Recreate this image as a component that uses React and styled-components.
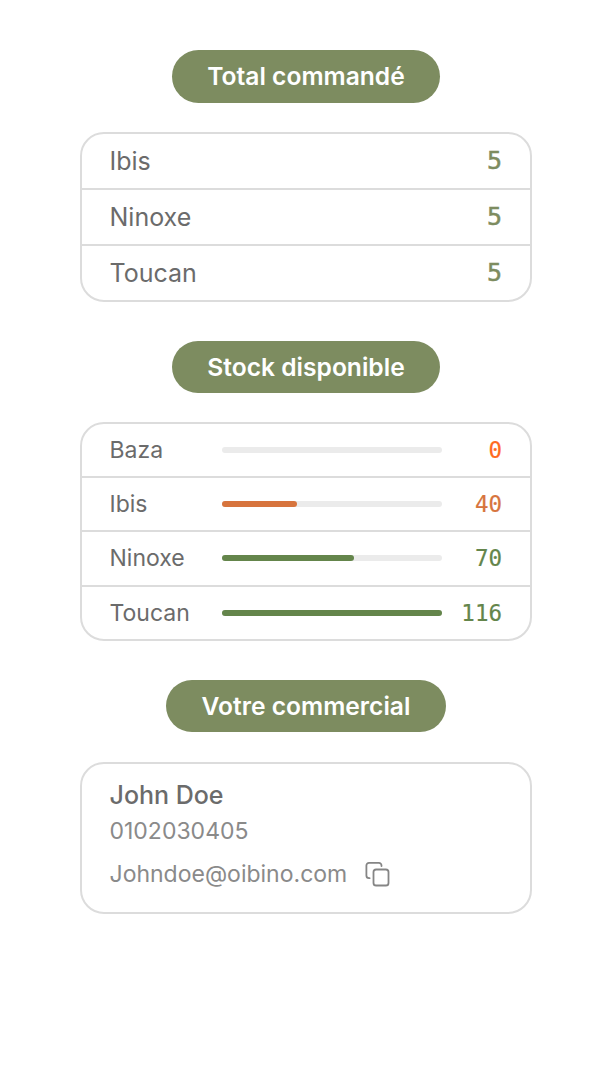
import styled, { createGlobalStyle } from "styled-components";

const GlobalStyle = createGlobalStyle`
  html, body { margin: 0; padding: 0; background: #fff; }
  body { font-family: Inter, "Liberation Sans", sans-serif; }
`;

const orders = [
  { name: "Ibis", qty: 5 },
  { name: "Ninoxe", qty: 5 },
  { name: "Toucan", qty: 5 },
];

const stock = [
  { name: "Baza", qty: 0, pct: 0 },
  { name: "Ibis", qty: 40, pct: 34 },
  { name: "Ninoxe", qty: 70, pct: 60 },
  { name: "Toucan", qty: 116, pct: 100 },
];

function CopyIcon() {
  return (
    <svg width="26" height="26" viewBox="0 0 26 26" fill="none" stroke="#858585" strokeWidth="1.8" strokeLinecap="round" strokeLinejoin="round">
      <rect x="9.5" y="8.5" width="15" height="16" rx="2.6" />
      <path d="M17.5 5V4.4a2.6 2.6 0 0 0-2.6-2.6H5A2.6 2.6 0 0 0 2.4 4.4v10.2a2.6 2.6 0 0 0 2.6 2.6h.6" />
    </svg>
  );
}

function stockColor(qty) {
  if (qty === 0) return "#ff6a1f";
  if (qty < 50) return "#d7743d";
  return "#64854b";
}

export default function App() {
  return (
    <Page>
      <GlobalStyle />
      <Pill>Total commandé</Pill>
      <Card>
        {orders.map((o) => (
          <OrderRow key={o.name}>
            <Label>{o.name}</Label>
            <Qty>{o.qty}</Qty>
          </OrderRow>
        ))}
      </Card>
      <Pill>Stock disponible</Pill>
      <Card>
        {stock.map((s) => (
          <StockRow key={s.name}>
            <StockLabel>{s.name}</StockLabel>
            <Track>
              <Fill $color={stockColor(s.qty)} style={{ width: `${s.pct}%` }} />
            </Track>
            <StockQty $color={stockColor(s.qty)}>{s.qty}</StockQty>
          </StockRow>
        ))}
      </Card>
      <Pill $wide>Votre commercial</Pill>
      <Contact>
        <Name>John Doe</Name>
        <Phone>0102030405</Phone>
        <MailRow>
          <span>Johndoe@oibino.com</span>
          <CopyIcon />
        </MailRow>
      </Contact>
    </Page>
  );
}

const Page = styled.div`
  display: flex;
  flex-direction: column;
  align-items: center;
  min-height: 1070px;
  padding-top: 50px;
  box-sizing: border-box;
`;

const Pill = styled.div`
  width: ${(p) => (p.$wide ? "280px" : "268px")};
  height: 52.5px;
  flex-shrink: 0;
  border-radius: 27px;
  background: #7d8c60;
  color: #fff;
  font-size: 24.6px;
  font-weight: 600;
  display: flex;
  align-items: center;
  justify-content: center;
  margin-bottom: 29px;
`;

const Card = styled.div`
  width: 452px;
  box-sizing: border-box;
  border: 2px solid #dcdcdc;
  border-radius: 24px;
  margin-bottom: 39px;
`;

const OrderRow = styled.div`
  height: 54px;
  display: flex;
  align-items: center;
  justify-content: space-between;
  padding: 0 28px 0 27.5px;
  & + & { border-top: 2px solid #dcdcdc; }
`;

const Label = styled.span`
  font-size: 25px;
  color: #6b6b6b;
`;

const Qty = styled.span`
  font-family: "DejaVu Sans Mono", monospace;
  font-size: 25px;
  color: #7d8c60;
  -webkit-text-stroke: 0.5px #7d8c60;
`;

const StockRow = styled.div`
  height: 52.2px;
  display: flex;
  align-items: center;
  padding: 0 28px 0 27.5px;
  & + & { border-top: 2px solid #dcdcdc; }
`;

const StockLabel = styled.span`
  width: 112.5px;
  font-size: 23px;
  color: #6b6b6b;
`;

const Track = styled.div`
  width: 220px;
  height: 6px;
  border-radius: 3px;
  background: #ebebeb;
`;

const Fill = styled.div`
  height: 100%;
  border-radius: 3px;
  background: ${(p) => p.$color};
`;

const StockQty = styled.span`
  flex: 1;
  text-align: right;
  font-family: "DejaVu Sans Mono", monospace;
  font-size: 22.5px;
  color: ${(p) => p.$color};
  -webkit-text-stroke: 0.2px ${(p) => p.$color};
`;

const Contact = styled.div`
  width: 452px;
  height: 152px;
  margin-top: 0.4px;
  box-sizing: border-box;
  border: 2px solid #dcdcdc;
  border-radius: 24px;
  padding: 16px 28px 0 27.5px;
`;

const Name = styled.div`
  font-size: 25px;
  font-weight: 550;
  color: #6b6b6b;
`;

const Phone = styled.div`
  font-size: 23px;
  color: #8a8a8a;
  margin-top: 7.5px;
`;

const MailRow = styled.div`
  display: flex;
  align-items: center;
  gap: 17px;
  font-size: 23px;
  color: #8a8a8a;
  margin-top: 15px;
`;
